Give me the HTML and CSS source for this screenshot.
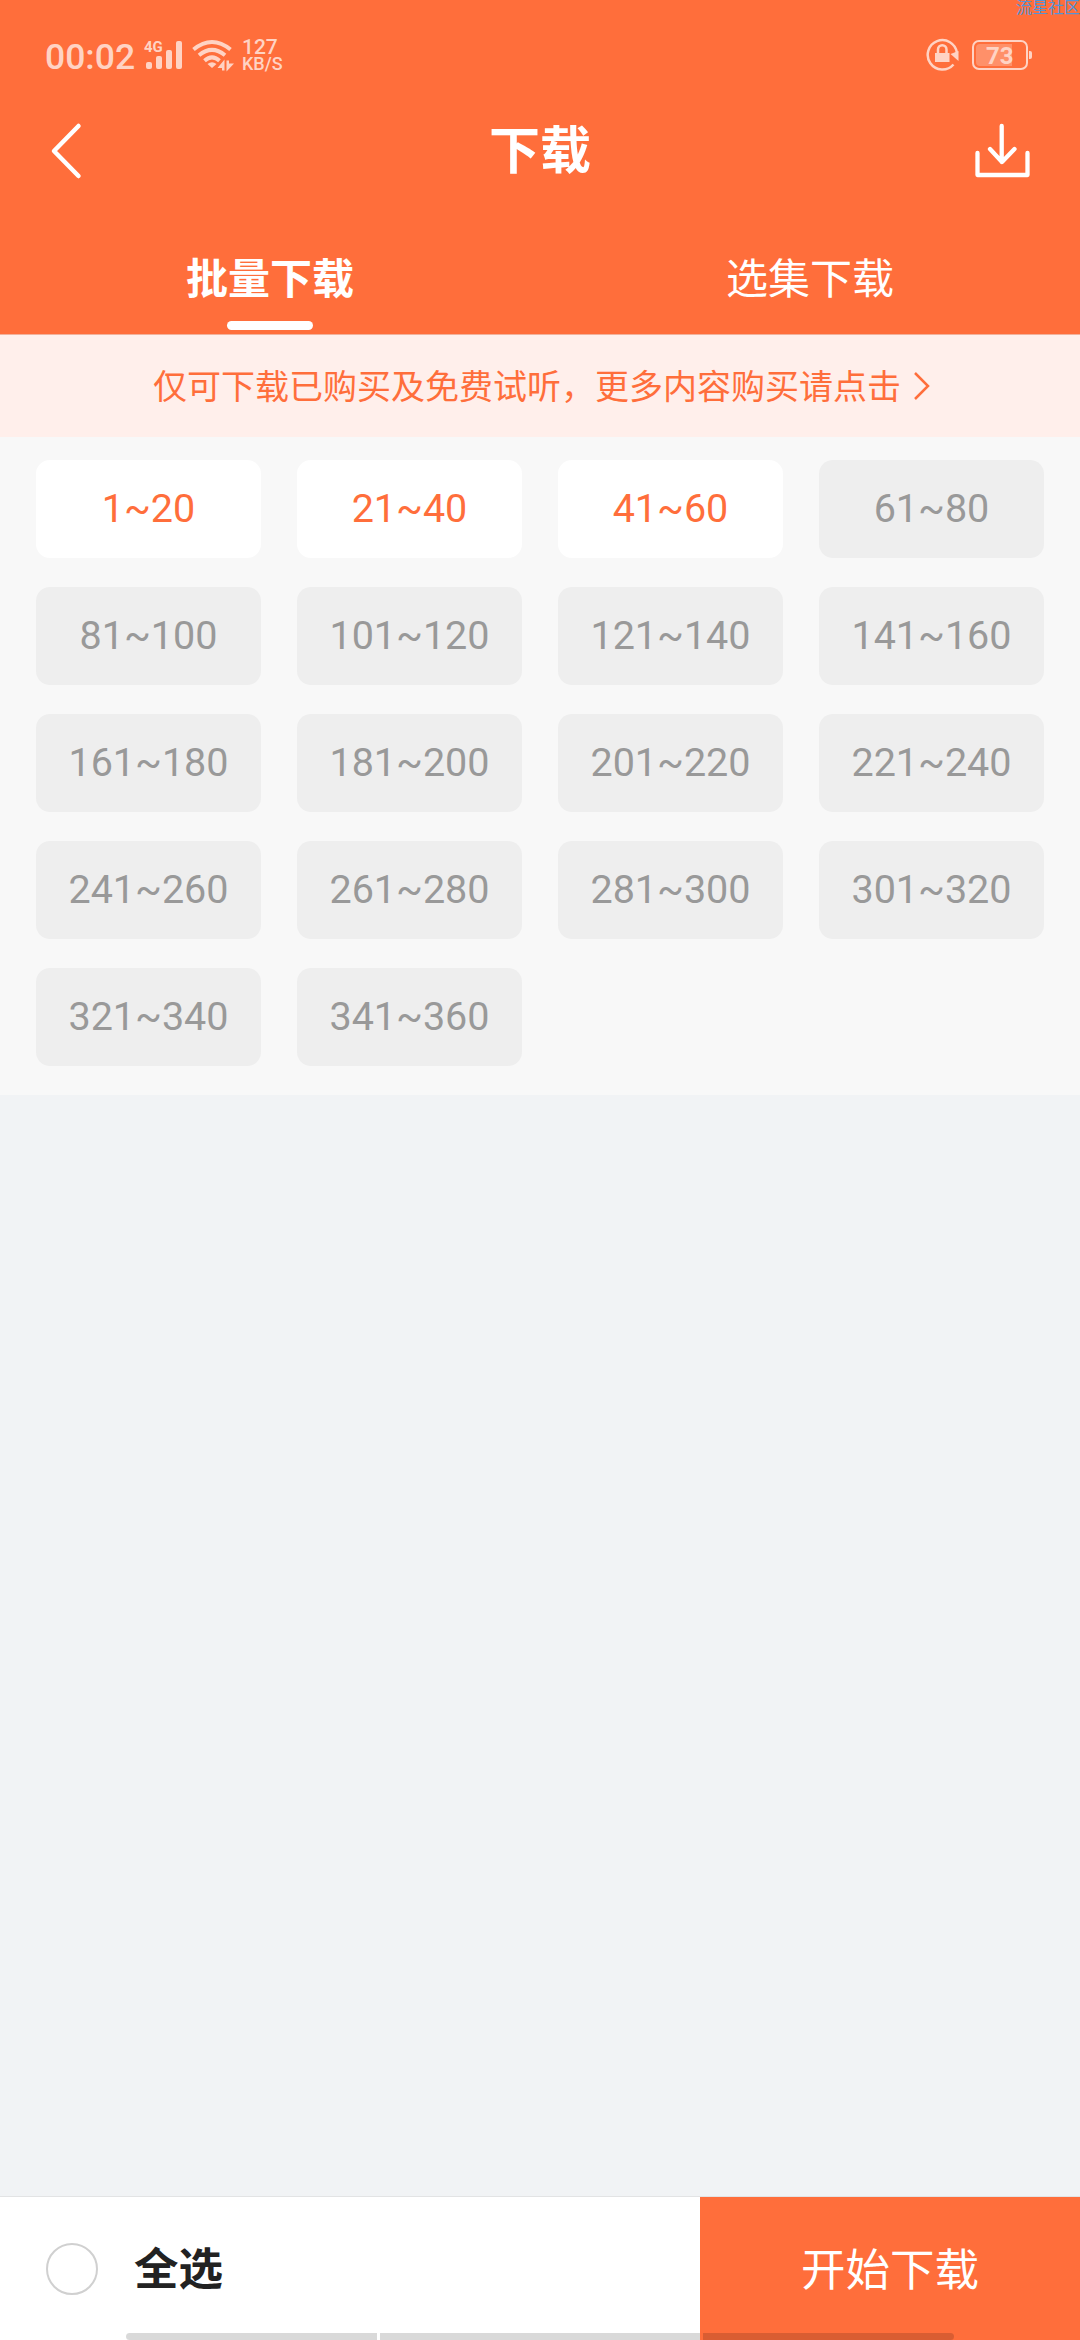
FILE: index.html
```html
<!DOCTYPE html>
<html lang="zh-CN">
<head>
<meta charset="utf-8">
<title>下载</title>
<link rel="stylesheet" href="styles.css">
</head>
<body>
<div class="screen">
  <header class="header">
    <div class="status">
      <span class="clock">00:02</span>
      <span class="signal">
        <svg width="40" height="32" viewBox="0 0 40 32" fill="currentColor"><rect x="3" y="23" width="6" height="7" rx="2"/><rect x="13" y="17" width="6" height="13" rx="2"/><rect x="23" y="11" width="6" height="19" rx="2"/><rect x="33" y="2" width="6" height="28" rx="2"/></svg>
        <span class="network">4G</span>
      </span>
      <svg class="wifi" width="44" height="34" viewBox="0 0 44 34" fill="none" stroke="currentColor" stroke-width="4">
        <path d="M1.500 10.500Q20 -4.500 38.500 10.500"/>
        <path d="M7 16.200Q20 5.500 33 16.200"/>
        <path d="M12.500 21.700Q20 15.200 27.500 21.700"/>
        <path d="M15.500 25Q20 21.500 24.500 25L20 29Z" fill="currentColor" stroke="none"/>
        <path d="M32.500 20.500V31.500H30V29H25.500ZM34.500 32.500V21.500H37V24.500H42Z" fill="currentColor" stroke="none"/>
      </svg>
      <span class="speed"><span class="rate">127</span><span class="unit">KB/S</span></span>
      <svg class="lock" width="34" height="34" viewBox="0 0 34 34" fill="none" stroke="currentColor" stroke-width="2.500">
        <path d="M31 15A14.700 14.700 0 1 0 27.500 26.500"/>
        <path d="M24.500 16L32.500 13V23Z" fill="currentColor" stroke="none"/>
        <rect x="9" y="15" width="14.500" height="9" fill="currentColor" stroke="none"/>
        <path d="M12 16V11.500A4 4 0 0 1 20.500 11.500V16"/>
      </svg>
      <span class="battery"><span class="level"></span><span class="percent">73</span></span>
      <span class="battery-tip"></span>
    </div>
    <div class="titlebar">
      <svg class="back" width="36" height="60" viewBox="0 0 36 60" fill="none" stroke="#fff" stroke-width="4.500" stroke-linecap="round" stroke-linejoin="round"><path d="M30.500 5L6 30L30.500 55"/></svg>
      <h1 class="title">下载</h1>
      <svg class="save" width="60" height="60" viewBox="0 0 60 60" fill="none" stroke="#fff" stroke-width="4.300" stroke-linecap="round" stroke-linejoin="round"><path d="M31.700 5V41M20 28L32 41L44.500 28M7.500 32V54H57.500V32"/></svg>
    </div>
    <nav class="tabs">
      <a class="tab active">批量下载</a>
      <a class="tab">选集下载</a>
    </nav>
    <span class="watermark">流星社区</span>
  </header>
  <div class="notice">
    <span>仅可下载已购买及免费试听，更多内容购买请点击</span>
    <svg width="18" height="30" viewBox="0 0 18 30" fill="none" stroke="currentColor" stroke-width="2.500"><path d="M2 2L15 15L2 28"/></svg>
  </div>
  <main class="ranges">
    <span class="range available">1~20</span><span class="range available">21~40</span><span class="range available">41~60</span><span class="range">61~80</span>
    <span class="range">81~100</span><span class="range">101~120</span><span class="range">121~140</span><span class="range">141~160</span>
    <span class="range">161~180</span><span class="range">181~200</span><span class="range">201~220</span><span class="range">221~240</span>
    <span class="range">241~260</span><span class="range">261~280</span><span class="range">281~300</span><span class="range">301~320</span>
    <span class="range">321~340</span><span class="range">341~360</span>
  </main>
  <footer class="footer">
    <div class="select-all"><span class="circle"></span><span class="select-text">全选</span></div>
    <div class="start">开始下载</div>
    <div class="gesture"><i class="edge-left"></i><i class="middle"></i><i class="edge-right"></i></div>
  </footer>
</div>
</body>
</html>
```
FILE: styles.css
```css
* { box-sizing: border-box; }
body { margin: 0; font-family: Roboto, "Noto Sans CJK SC", sans-serif; }
svg { display: block; flex: none; }
.screen { width: 1080px; height: 2340px; display: flex; flex-direction: column; background: #f1f3f5; overflow: hidden; }

.header { position: relative; height: 334px; background: #ff6e3b; color: #fff; overflow: hidden; flex: none; }
.status { height: 100px; padding: 39px 48px 0 45px; display: flex; align-items: flex-start; color: #ffd3c4; }
.clock { width: 98px; font-size: 35.500px; line-height: 36px; font-weight: 500; }
.signal { position: relative; width: 49px; }
.network { position: absolute; left: 1px; top: 0; font-size: 15px; line-height: 16px; font-weight: 700; }
.wifi { margin-right: 6px; }
.speed { display: flex; flex-direction: column; flex: 1; }
.rate { font-size: 21px; line-height: 17px; font-weight: 500; }
.unit { font-size: 18px; line-height: 15px; font-weight: 500; }
.lock { margin: -1px 12px 0 0; }
.battery { position: relative; width: 56px; height: 30px; margin-top: 1px; border: 2px solid currentColor; border-radius: 7px; padding: 2px; }
.level { display: block; width: 36px; height: 22px; border-radius: 4px 0 0 4px; background: #ff9069; }
.percent { position: absolute; left: 12px; top: 1px; font-size: 24px; line-height: 26px; font-weight: 700; }
.battery-tip { width: 3px; height: 8px; margin: 12px 0 0 1px; border-radius: 0 2px 2px 0; background: currentColor; }
.watermark { position: absolute; left: 1016px; top: -2px; width: 64px; font-size: 16px; line-height: 20px; color: #5294d8; white-space: nowrap; }

.titlebar { height: 102px; display: flex; align-items: center; justify-content: space-between; padding: 0 50px 0 48px; }
.title { margin: 2px 0 0 26px; font-size: 51px; line-height: 74px; font-weight: 700; }
.tabs { height: 132px; display: flex; }
.tab { flex: 1; height: 128px; padding-top: 47px; display: flex; flex-direction: column; align-items: center; justify-content: space-between; font-size: 42px; line-height: 62px; }
.active { font-weight: 700; }
.active::after { content: ""; width: 86px; height: 9px; border-radius: 4.500px; background: #fff; }

.notice { height: 103px; padding-left: 153px; display: flex; align-items: center; gap: 12px; background: #ffefeb; border-top: 1px solid #f2b19b; color: #ff6e3b; font-size: 34px; line-height: 50px; flex: none; }
.notice span { padding-top: 1px; }
.notice svg { margin-top: -1px; }

.ranges { height: 658px; padding: 23px 36px 29px; display: grid; grid-template-columns: repeat(4, 225px); grid-auto-rows: 98px; gap: 29px 36px; background: #f8f8f8; flex: none; }
.range { display: flex; align-items: center; justify-content: center; padding-bottom: 2px; border-radius: 14px; background: #eee; color: #999; font-size: 39.500px; }
.available { background: #fff; color: #ff6e3b; }

.footer { position: relative; height: 144px; margin-top: auto; display: flex; border-top: 1px solid #e2e3e4; background: #fff; flex: none; }
.select-all { width: 700px; padding-left: 46px; display: flex; align-items: center; }
.circle { width: 52px; height: 52px; border: 2.500px solid #d0d0d0; border-radius: 50%; }
.select-text { margin-left: 36px; padding-top: 3px; font-size: 44.500px; line-height: 66px; font-weight: 700; color: #222; }
.start { flex: 1; display: flex; align-items: center; justify-content: center; padding-top: 4px; background: #ff6e3b; color: #fff; font-size: 44.500px; line-height: 66px; }
.gesture { position: absolute; left: 126px; bottom: 0; width: 828px; height: 7px; display: flex; gap: 3px; }
.gesture i { background: rgba(0, 0, 0, .15); }
.edge-left { width: 251px; border-radius: 4px 0 0 4px; }
.middle { width: 320px; }
.edge-right { width: 251px; border-radius: 0 4px 4px 0; }
```
